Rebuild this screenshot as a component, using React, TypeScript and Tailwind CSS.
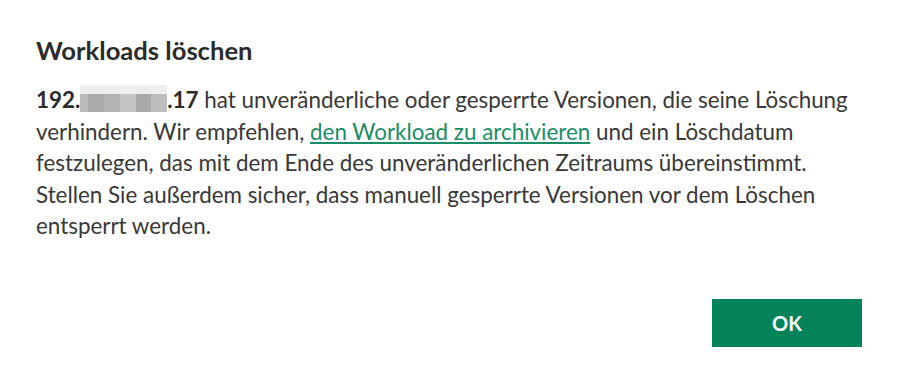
import React from 'react';

function Redacted() {
  const cols = ['bg-[#ababab]', 'bg-[#b3b3b3]', 'bg-[#c4c4c4]', 'bg-[#a9a9a9]', 'bg-[#bdbdbd]'];
  return (
    <span className="inline-block h-[27px] w-[87px] overflow-hidden align-[-4px]">
      <span className="block h-[9px] w-full bg-[#eeeeee]" />
      <span className="flex h-[18px]">
        <span className="block w-[9px] bg-[#bababa]" />
        {cols.map((c, i) => (
          <span key={i} className={`block w-[18px] ${c}`} />
        ))}
      </span>
    </span>
  );
}

export default function App() {
  return (
    <div className="h-[366px] w-[898px] bg-white font-['Lato',sans-serif] text-[#383838]">
      <div className="px-9 pt-[34px]">
        <h2 className="text-[25.6px] font-bold leading-[32px] text-[#2b2b2b]">Workloads löschen</h2>
        <p className="mt-[18px] w-[830px] text-[22.4px] leading-[31.6px]">
          <strong className="font-bold text-[#2b2b2b]">
            192.<Redacted />.17
          </strong>{' '}
          hat unveränderliche oder gesperrte Versionen, die seine Löschung verhindern. Wir empfehlen,{' '}
          <a href="#" className="text-[#1b8d66] underline underline-offset-2">
            den Workload zu archivieren
          </a>{' '}
          und ein Löschdatum festzulegen, das mit dem Ende des unveränderlichen Zeitraums übereinstimmt. Stellen Sie
          außerdem sicher, dass manuell gesperrte Versionen vor dem Löschen entsperrt werden.
        </p>
        <div className="mt-[57px] flex justify-end">
          <button className="h-12 w-[150px] bg-[#048259] text-[20px] font-bold text-white">OK</button>
        </div>
      </div>
    </div>
  );
}
